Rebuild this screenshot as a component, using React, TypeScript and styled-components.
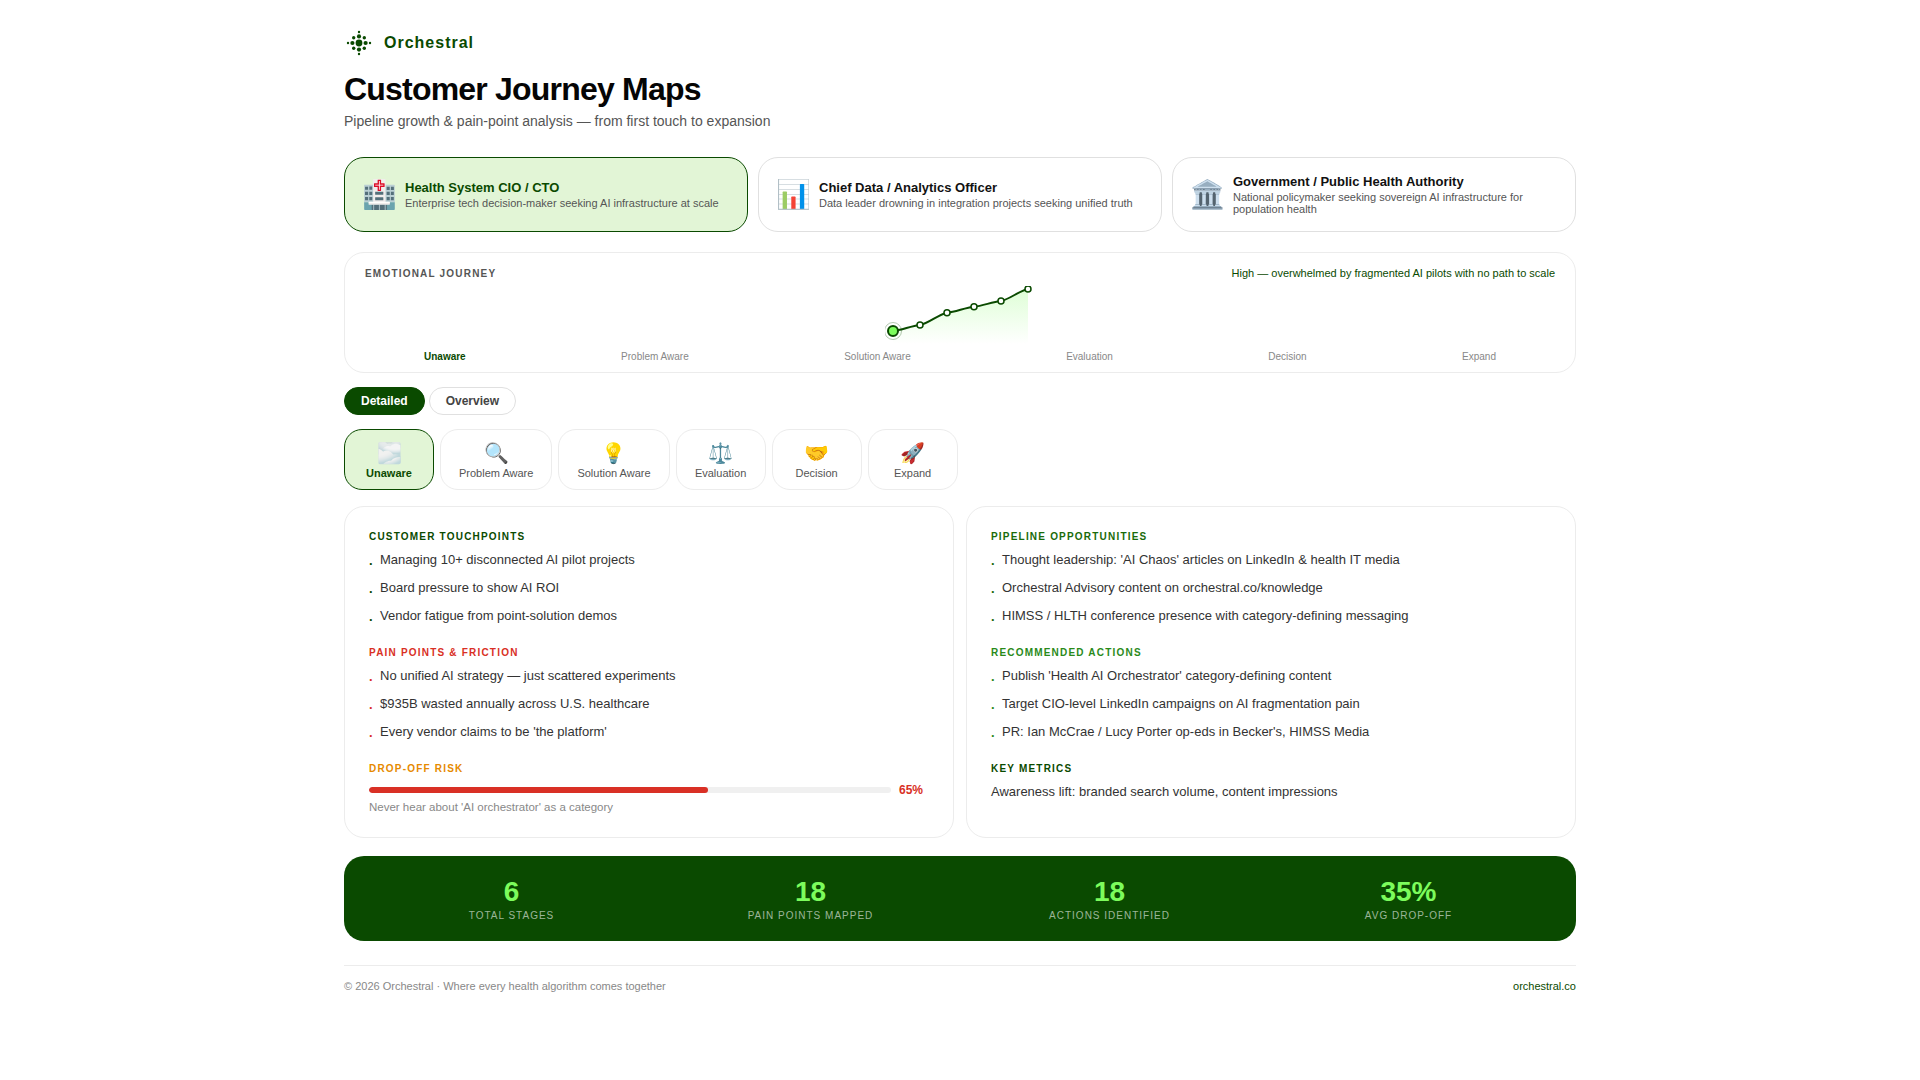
import * as React from 'react'
import styled, { createGlobalStyle } from 'styled-components'

const GREEN = '#0a4a00'
const LIME = '#7cfc5c'
const TINT = '#e2f5d6'
const LINE = '#ececec'

const GlobalStyle = createGlobalStyle`
  html, body {
    margin: 0;
    background: #fff;
    font-family: "Liberation Sans", Arial, sans-serif;
    color: #111;
  }
  * { box-sizing: border-box; }
`

const Page = styled.div`
  width: 1280px;
  margin: 0 auto;
  padding: 30px 24px 0;
`

const Brand = styled.div`
  display: flex;
  align-items: center;
  gap: 12px;
  height: 26px;
  padding-left: 2px;
`

const BrandName = styled.span`
  font-size: 16px;
  font-weight: 700;
  letter-spacing: 1px;
  color: ${GREEN};
`

const Title = styled.h1`
  margin: 15px 0 0;
  font-size: 32px;
  line-height: 37px;
  font-weight: 700;
  letter-spacing: -0.8px;
  color: #050505;
`

const Subtitle = styled.p`
  margin: 5px 0 0;
  font-size: 14px;
  line-height: 16px;
  color: #555;
`

const Personas = styled.div`
  display: grid;
  grid-template-columns: repeat(3, 1fr);
  gap: 10px;
  margin-top: 28px;
`

const Persona = styled.div<{ $active?: boolean }>`
  display: flex;
  align-items: center;
  gap: 8px;
  height: 75px;
  padding: 0 17px;
  border-radius: 20px;
  border: 1px solid ${p => (p.$active ? GREEN : '#e0e0e0')};
  background: ${p => (p.$active ? TINT : '#fff')};
`

const PersonaIcon = styled.span`
  font-size: 28px;
  line-height: 1;
  flex-shrink: 0;
`

const PersonaName = styled.div<{ $active?: boolean }>`
  font-size: 13px;
  line-height: 15px;
  font-weight: 700;
  color: ${p => (p.$active ? GREEN : '#111')};
`

const PersonaDesc = styled.div`
  font-size: 11px;
  line-height: 12px;
  margin-top: 2px;
  color: #555;
`

const JourneyCard = styled.section`
  margin-top: 20px;
  height: 121px;
  padding: 14px 20px 0;
  border: 1px solid ${LINE};
  border-radius: 20px;
`

const JourneyHead = styled.div`
  display: flex;
  justify-content: space-between;
  align-items: center;
  height: 12px;
`

const JourneyLabel = styled.span`
  font-size: 10px;
  font-weight: 700;
  letter-spacing: 1.2px;
  color: #555;
`

const JourneyNote = styled.span`
  font-size: 11px;
  color: ${GREEN};
`

const Chart = styled.svg`
  display: block;
  margin: 7px auto 0;
`

const StageAxis = styled.div`
  display: flex;
  justify-content: space-between;
  padding: 0 59px;
  margin-top: 7px;
`

const AxisLabel = styled.span<{ $active?: boolean }>`
  font-size: 10px;
  line-height: 12px;
  font-weight: ${p => (p.$active ? 700 : 400)};
  color: ${p => (p.$active ? GREEN : '#888')};
`

const Tabs = styled.div`
  display: flex;
  gap: 4px;
  margin-top: 14px;
`

const Tab = styled.button<{ $active?: boolean }>`
  height: 28px;
  padding: 0 16px;
  border-radius: 14px;
  font: 700 12px "Liberation Sans", Arial, sans-serif;
  border: 1px solid ${p => (p.$active ? GREEN : '#e0e0e0')};
  background: ${p => (p.$active ? GREEN : '#fff')};
  color: ${p => (p.$active ? '#fff' : '#444')};
`

const Stages = styled.div`
  display: flex;
  gap: 6px;
  margin-top: 14px;
`

const Stage = styled.div<{ $active?: boolean }>`
  display: flex;
  flex-direction: column;
  align-items: center;
  min-width: 90px;
  height: 61px;
  padding: 11px 18px 0;
  border-radius: 18px;
  border: 1px solid ${p => (p.$active ? GREEN : LINE)};
  background: ${p => (p.$active ? TINT : '#fff')};
`

const StageIcon = styled.span`
  font-size: 20px;
  line-height: 24px;
`

const StageName = styled.span<{ $active?: boolean }>`
  margin-top: 2px;
  font-size: 11px;
  line-height: 13px;
  font-weight: ${p => (p.$active ? 700 : 400)};
  color: ${p => (p.$active ? GREEN : '#555')};
`

const Panels = styled.div`
  display: grid;
  grid-template-columns: 1fr 1fr;
  gap: 12px;
  margin-top: 16px;
`

const Panel = styled.section`
  height: 332px;
  padding: 24px 24px 0;
  border: 1px solid ${LINE};
  border-radius: 20px;
`

const Block = styled.div`
  margin-bottom: 17px;
`

const BlockTitle = styled.h3<{ $color: string }>`
  margin: 0 0 3px;
  font-size: 10px;
  line-height: 12px;
  font-weight: 700;
  letter-spacing: 1.2px;
  color: ${p => p.$color};
`

const Items = styled.ul`
  list-style: none;
  margin: 0;
  padding: 0;
`

const Item = styled.li<{ $dot: string }>`
  position: relative;
  padding-left: 11px;
  font-size: 13px;
  line-height: 20px;
  padding-top: 4px;
  padding-bottom: 4px;
  color: #333;

  &::before {
    content: '.';
    position: absolute;
    left: 0;
    top: 5px;
    font-weight: 700;
    color: ${p => p.$dot};
  }
`

const Metric = styled.p`
  margin: 0;
  padding-top: 4px;
  font-size: 13px;
  line-height: 20px;
  color: #333;
`

const RiskRow = styled.div`
  display: flex;
  align-items: center;
  gap: 8px;
  margin-top: 8px;
`

const RiskTrack = styled.div`
  flex: 1;
  height: 6px;
  border-radius: 3px;
  background: #f0f0f0;
  overflow: hidden;
`

const RiskFill = styled.div`
  height: 100%;
  border-radius: 3px;
  background: #d93025;
`

const RiskValue = styled.span`
  min-width: 30px;
  font-size: 12px;
  line-height: 14px;
  font-weight: 700;
  color: #d93025;
`

const RiskNote = styled.p`
  margin: 3px 0 0;
  font-size: 11.5px;
  line-height: 14px;
  color: #888;
`

const Stats = styled.div`
  display: grid;
  grid-template-columns: repeat(4, 1fr);
  gap: 12px;
  height: 85px;
  margin-top: 18px;
  padding: 20px 24px 0;
  border-radius: 20px;
  background: ${GREEN};
`

const Stat = styled.div`
  text-align: center;
`

const StatValue = styled.div`
  font-size: 28px;
  line-height: 32px;
  font-weight: 700;
  color: ${LIME};
`

const StatLabel = styled.div`
  font-size: 10px;
  line-height: 12px;
  margin-top: 2px;
  letter-spacing: 1px;
  color: rgba(255, 255, 255, 0.6);
`

const Footer = styled.footer`
  display: flex;
  justify-content: space-between;
  margin-top: 24px;
  padding-top: 14px;
  border-top: 1px solid ${LINE};
  font-size: 11px;
  line-height: 13px;
  color: #888;
`

const FooterLink = styled.span`
  color: ${GREEN};
`

const personas = [
  { icon: '🏥', name: 'Health System CIO / CTO', desc: 'Enterprise tech decision-maker seeking AI infrastructure at scale', active: true },
  { icon: '📊', name: 'Chief Data / Analytics Officer', desc: 'Data leader drowning in integration projects seeking unified truth' },
  { icon: '🏛️', name: 'Government / Public Health Authority', desc: 'National policymaker seeking sovereign AI infrastructure for population health' },
]

const stages = [
  { icon: '🌫️', name: 'Unaware', active: true },
  { icon: '🔍', name: 'Problem Aware' },
  { icon: '💡', name: 'Solution Aware' },
  { icon: '⚖️', name: 'Evaluation' },
  { icon: '🤝', name: 'Decision' },
  { icon: '🚀', name: 'Expand' },
]

const stats = [
  { value: '6', label: 'TOTAL STAGES' },
  { value: '18', label: 'PAIN POINTS MAPPED' },
  { value: '18', label: 'ACTIONS IDENTIFIED' },
  { value: '35%', label: 'AVG DROP-OFF' },
]

const points = [
  [8, 45],
  [35, 39],
  [62, 26.7],
  [89, 20.7],
  [116, 15],
  [143, 3],
]

const Logo = () => (
  <svg width="26" height="26" viewBox="0 0 26 26" fill={GREEN}>
    <circle cx="13" cy="13" r="3.4" />
    <circle cx="13" cy="6.4" r="2.1" />
    <circle cx="13" cy="19.6" r="2.1" />
    <circle cx="6.4" cy="13" r="2.1" />
    <circle cx="19.6" cy="13" r="2.1" />
    <circle cx="7.7" cy="7.7" r="1.7" />
    <circle cx="18.3" cy="7.7" r="1.7" />
    <circle cx="7.7" cy="18.3" r="1.7" />
    <circle cx="18.3" cy="18.3" r="1.7" />
    <circle cx="13" cy="2" r="1.2" />
    <circle cx="13" cy="24" r="1.2" />
    <circle cx="2" cy="13" r="1.2" />
    <circle cx="24" cy="13" r="1.2" />
  </svg>
)

// gentle S between stages, the line isn't quite straight in the design
const curve = points
  .map(([x, y], i) => {
    if (i === 0) return `M${x},${y}`
    const [px, py] = points[i - 1]
    const lift = (y - py) * 0.15
    return `C${px + 9},${py + lift} ${x - 9},${y - lift} ${x},${y}`
  })
  .join(' ')

const JourneyChart = () => (
  <Chart width="151" height="58" viewBox="0 0 151 58">
    <defs>
      <linearGradient id="journeyFill" x1="0" y1="0" x2="0" y2="1">
        <stop offset="0" stopColor={LIME} stopOpacity="0.25" />
        <stop offset="1" stopColor={LIME} stopOpacity="0" />
      </linearGradient>
    </defs>
    <path d={`${curve} L143,58 L8,58 Z`} fill="url(#journeyFill)" />
    <path d={curve} fill="none" stroke={GREEN} strokeWidth="2" />
    <circle cx="8" cy="45" r="8.5" fill="none" stroke={GREEN} strokeOpacity="0.3" strokeWidth="1" />
    {points.map(([x, y], i) => (
      <circle
        key={x}
        cx={x}
        cy={y}
        r={i === 0 ? 5 : 3}
        fill={i === 0 ? LIME : '#fff'}
        stroke={GREEN}
        strokeWidth={i === 0 ? 2 : 1.5}
      />
    ))}
  </Chart>
)

const Bullets = ({ items, dot }: { items: string[]; dot: string }) => (
  <Items>
    {items.map(text => (
      <Item key={text} $dot={dot}>{text}</Item>
    ))}
  </Items>
)

export default function App() {
  return (
    <Page>
      <GlobalStyle />
      <Brand>
        <Logo />
        <BrandName>Orchestral</BrandName>
      </Brand>
      <Title>Customer Journey Maps</Title>
      <Subtitle>Pipeline growth &amp; pain-point analysis — from first touch to expansion</Subtitle>

      <Personas>
        {personas.map(p => (
          <Persona key={p.name} $active={p.active}>
            <PersonaIcon>{p.icon}</PersonaIcon>
            <div>
              <PersonaName $active={p.active}>{p.name}</PersonaName>
              <PersonaDesc>{p.desc}</PersonaDesc>
            </div>
          </Persona>
        ))}
      </Personas>

      <JourneyCard>
        <JourneyHead>
          <JourneyLabel>EMOTIONAL JOURNEY</JourneyLabel>
          <JourneyNote>High — overwhelmed by fragmented AI pilots with no path to scale</JourneyNote>
        </JourneyHead>
        <JourneyChart />
        <StageAxis>
          {stages.map(s => (
            <AxisLabel key={s.name} $active={s.active}>{s.name}</AxisLabel>
          ))}
        </StageAxis>
      </JourneyCard>

      <Tabs>
        <Tab $active>Detailed</Tab>
        <Tab>Overview</Tab>
      </Tabs>

      <Stages>
        {stages.map(s => (
          <Stage key={s.name} $active={s.active}>
            <StageIcon>{s.icon}</StageIcon>
            <StageName $active={s.active}>{s.name}</StageName>
          </Stage>
        ))}
      </Stages>

      <Panels>
        <Panel>
          <Block>
            <BlockTitle $color={GREEN}>CUSTOMER TOUCHPOINTS</BlockTitle>
            <Bullets
              dot={GREEN}
              items={[
                'Managing 10+ disconnected AI pilot projects',
                'Board pressure to show AI ROI',
                'Vendor fatigue from point-solution demos',
              ]}
            />
          </Block>
          <Block>
            <BlockTitle $color="#d93025">PAIN POINTS &amp; FRICTION</BlockTitle>
            <Bullets
              dot="#d93025"
              items={[
                'No unified AI strategy — just scattered experiments',
                '$935B wasted annually across U.S. healthcare',
                "Every vendor claims to be 'the platform'",
              ]}
            />
          </Block>
          <Block>
            <BlockTitle $color="#e68a00">DROP-OFF RISK</BlockTitle>
            <RiskRow>
              <RiskTrack>
                <RiskFill style={{ width: '65%' }} />
              </RiskTrack>
              <RiskValue>65%</RiskValue>
            </RiskRow>
            <RiskNote>Never hear about 'AI orchestrator' as a category</RiskNote>
          </Block>
        </Panel>
        <Panel>
          <Block>
            <BlockTitle $color="#1a6b0a">PIPELINE OPPORTUNITIES</BlockTitle>
            <Bullets
              dot="#1a6b0a"
              items={[
                "Thought leadership: 'AI Chaos' articles on LinkedIn & health IT media",
                'Orchestral Advisory content on orchestral.co/knowledge',
                'HIMSS / HLTH conference presence with category-defining messaging',
              ]}
            />
          </Block>
          <Block>
            <BlockTitle $color="#2a8a1a">RECOMMENDED ACTIONS</BlockTitle>
            <Bullets
              dot="#2a8a1a"
              items={[
                "Publish 'Health AI Orchestrator' category-defining content",
                'Target CIO-level LinkedIn campaigns on AI fragmentation pain',
                "PR: Ian McCrae / Lucy Porter op-eds in Becker's, HIMSS Media",
              ]}
            />
          </Block>
          <Block>
            <BlockTitle $color={GREEN}>KEY METRICS</BlockTitle>
            <Metric>Awareness lift: branded search volume, content impressions</Metric>
          </Block>
        </Panel>
      </Panels>

      <Stats>
        {stats.map(s => (
          <Stat key={s.label}>
            <StatValue>{s.value}</StatValue>
            <StatLabel>{s.label}</StatLabel>
          </Stat>
        ))}
      </Stats>

      <Footer>
        <span>© 2026 Orchestral · Where every health algorithm comes together</span>
        <FooterLink>orchestral.co</FooterLink>
      </Footer>
    </Page>
  )
}
